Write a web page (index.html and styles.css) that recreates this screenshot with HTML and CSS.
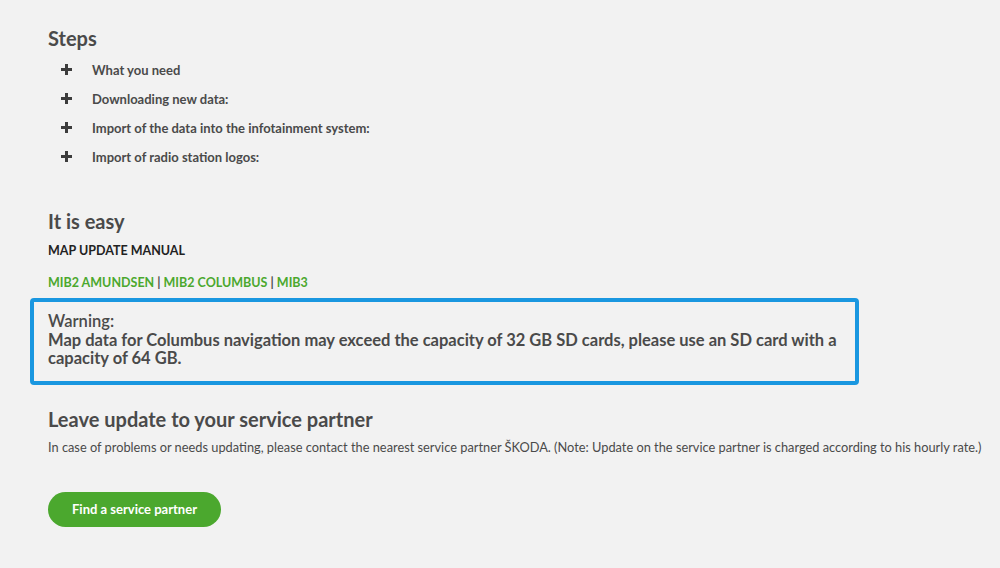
FILE: index.html
```html
<!DOCTYPE html>
<html lang="en">
<head>
    <meta charset="UTF-8">
    <title>Map update</title>
    <link rel="stylesheet" href="styles.css">
</head>
<body>
<div class="page">
    <section class="steps">
        <h2>Steps</h2>
        <ul class="step-list">
            <li><span class="plus"></span>What you need</li>
            <li><span class="plus"></span>Downloading new data:</li>
            <li><span class="plus"></span>Import of the data into the infotainment system:</li>
            <li><span class="plus"></span>Import of radio station logos:</li>
        </ul>
    </section>

    <section class="easy">
        <h2>It is easy</h2>
        <p class="manual">MAP UPDATE MANUAL</p>
        <p class="links"><a href="#">MIB2 AMUNDSEN</a> | <a href="#">MIB2 COLUMBUS</a> | <a href="#">MIB3</a></p>
    </section>

    <div class="warning">
        <p class="warning-title">Warning:</p>
        <p class="warning-text">Map data for Columbus navigation may exceed the capacity of 32 GB SD cards, please use an SD card with a capacity of 64 GB.</p>
    </div>

    <section class="partner">
        <h2>Leave update to your service partner</h2>
        <p>In case of problems or needs updating, please contact the nearest service partner ŠKODA. (Note: Update on the service partner is charged according to his hourly rate.)</p>
        <a class="btn" href="#">Find a service partner</a>
    </section>
</div>
</body>
</html>
```

FILE: styles.css
```css
body, h2, p, ul, li {
    margin: 0;
    padding: 0;
    list-style: none;
}
body {
    background: #f2f2f2;
    color: #4a4a4a;
    font-family: Lato, "Liberation Sans", sans-serif;
}
.page {
    padding: 25px 0 0 48px;
}
h2 {
    font-size: 20px;
    font-weight: 700;
    line-height: 26px;
}
.step-list {
    padding: 4px 0 0 13px;
}
.step-list li {
    display: flex;
    align-items: center;
    height: 29px;
    font-size: 13px;
    font-weight: 700;
}
.plus {
    position: relative;
    width: 11px;
    height: 11px;
    margin-right: 20px;
}
.plus::before,
.plus::after {
    content: "";
    position: absolute;
    background: #3c3c3c;
}
.plus::before {
    left: 0;
    top: 4px;
    width: 11px;
    height: 2.5px;
}
.plus::after {
    left: 4.25px;
    top: 0;
    width: 2.5px;
    height: 11px;
}
.easy {
    padding-top: 37px;
}
.manual {
    margin-top: 9px;
    font-size: 12.5px;
    font-weight: 700;
    color: #222;
}
.links {
    margin-top: 17px;
    font-size: 12.5px;
    font-weight: 700;
    color: #4a4a4a;
}
.links a {
    color: #4ba82e;
    text-decoration: none;
}
.warning {
    margin: 8px 0 0 -18px;
    width: 791px;
    padding: 10px 16px 13px 14px;
    border: 4px solid #1a97e0;
    border-radius: 4px;
    font-size: 16.5px;
    line-height: 18.5px;
}
.warning-title {
    font-weight: 600;
}
.warning-text {
    font-weight: 700;
}
.partner {
    padding-top: 21px;
}
.partner p {
    margin-top: 7px;
    font-size: 12.8px;
}
.btn {
    display: inline-block;
    margin-top: 37px;
    padding: 0 24px;
    height: 35px;
    line-height: 35px;
    border-radius: 18px;
    background: #4ba82e;
    color: #fff;
    font-size: 13px;
    font-weight: 700;
    text-decoration: none;
}
```
